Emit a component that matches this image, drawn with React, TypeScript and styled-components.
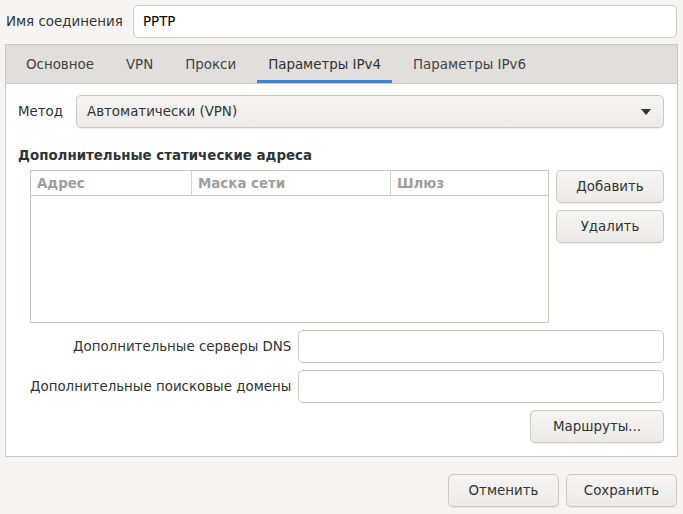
import React from 'react';
import styled, { createGlobalStyle } from 'styled-components';

const GlobalStyle = createGlobalStyle`
  html, body {
    margin: 0;
    padding: 0;
    background: #f6f5f4;
  }
  body {
    font-family: "DejaVu Sans", "Liberation Sans", sans-serif;
    font-size: 13.4px;
    color: #2e3436;
  }
  * {
    box-sizing: border-box;
  }
`;

const Window = styled.div`
  width: 683px;
  height: 514px;
  padding: 5px 6px 7px 5px;
  display: flex;
  flex-direction: column;
`;

const NameRow = styled.div`
  display: flex;
  align-items: center;
  height: 33px;
  padding-left: 1px;
`;

const NameLabel = styled.label`
  width: 127px;
`;

const Entry = styled.div`
  flex: 1;
  height: 33px;
  display: flex;
  align-items: center;
  padding: 0 9px;
  background: #fff;
  border: 1px solid #cdc7c2;
  border-radius: 5px;
  color: #000;
`;

const Notebook = styled.div`
  margin-top: 6px;
  width: 673px;
  border: 1px solid #cdc7c2;
  display: flex;
  flex-direction: column;
  background: #fff;
`;

const TabBar = styled.div`
  display: flex;
  height: 39px;
  padding-left: 4px;
  background: #e1dedb;
  border-bottom: 1px solid #cdc7c2;
`;

const Tab = styled.div<{ $active?: boolean }>`
  display: flex;
  align-items: center;
  padding: 0 11px;
  margin: 0 5px;
  color: ${(p) => (p.$active ? '#2e3436' : '#3f4546')};
  box-shadow: ${(p) => (p.$active ? 'inset 0 -3px 0 #3584e4' : 'none')};
`;

const Content = styled.div`
  padding: 11px 13px 13px 12px;
  display: flex;
  flex-direction: column;
`;

const MethodRow = styled.div`
  display: flex;
  align-items: center;
`;

const MethodLabel = styled.label`
  width: 58px;
`;

const Combo = styled.div`
  flex: 1;
  height: 33px;
  display: flex;
  align-items: center;
  justify-content: space-between;
  padding: 0 12px 0 10px;
  border: 1px solid #cdc7c2;
  border-radius: 5px;
  background: linear-gradient(#f6f5f4, #edebe9);
  box-shadow: 0 1px 0 rgba(0, 0, 0, 0.06);
`;

const Heading = styled.h3`
  margin: 20px 0 6px;
  font-size: 13.4px;
  font-weight: bold;
  line-height: 16px;
`;

const AddressSection = styled.div`
  display: flex;
  gap: 7px;
  margin-left: 12px;
`;

const Table = styled.div`
  width: 519px;
  height: 153px;
  border: 1px solid #cdc7c2;
  background: #fff;
`;

const TableHead = styled.div`
  display: grid;
  grid-template-columns: 160px 199px 1fr;
  height: 25px;
  border-bottom: 1px solid #cdc7c2;
`;

const HeadCell = styled.div`
  display: flex;
  align-items: center;
  padding-left: 6px;
  font-weight: bold;
  color: #9e9e9c;
  & + & {
    border-left: 1px solid #d8d4d0;
  }
`;

const ButtonColumn = styled.div`
  display: flex;
  flex-direction: column;
  gap: 7px;
  width: 108px;
`;

const Button = styled.button<{ $width?: number }>`
  height: 33px;
  width: ${(p) => (p.$width ? `${p.$width}px` : 'auto')};
  padding: 0 16px;
  font-family: inherit;
  font-size: 13.4px;
  color: #2e3436;
  border: 1px solid #cdc7c2;
  border-radius: 5px;
  background: linear-gradient(#f6f5f4, #edebe9);
  box-shadow: 0 1px 0 rgba(0, 0, 0, 0.07);
`;

const FieldGrid = styled.div`
  display: grid;
  grid-template-columns: auto 1fr;
  column-gap: 7px;
  row-gap: 7px;
  margin-top: 7px;
  margin-left: 12px;
  align-items: center;
`;

const FieldLabel = styled.label`
  text-align: right;
`;

const FieldEntry = styled.div`
  height: 33px;
  background: #fff;
  border: 1px solid #cdc7c2;
  border-radius: 5px;
`;

const RoutesRow = styled.div`
  display: flex;
  justify-content: flex-end;
  margin-top: 7px;
`;

const Footer = styled.div`
  display: flex;
  justify-content: flex-end;
  gap: 7px;
  margin-top: 17px;
`;

const Arrow = () => (
  <svg width="10" height="6" viewBox="0 0 10 6">
    <path d="M0 0 L10 0 L5 6 Z" fill="#2e3436" />
  </svg>
);

const tabs = ['Основное', 'VPN', 'Прокси', 'Параметры IPv4', 'Параметры IPv6'];

const App = () => {
  return (
    <>
      <GlobalStyle />
      <Window>
        <NameRow>
          <NameLabel>Имя соединения</NameLabel>
          <Entry>PPTP</Entry>
        </NameRow>
        <Notebook>
          <TabBar>
            {tabs.map((t) => (
              <Tab key={t} $active={t === 'Параметры IPv4'}>
                {t}
              </Tab>
            ))}
          </TabBar>
          <Content>
            <MethodRow>
              <MethodLabel>Метод</MethodLabel>
              <Combo>
                <span>Автоматически (VPN)</span>
                <Arrow />
              </Combo>
            </MethodRow>
            <Heading>Дополнительные статические адреса</Heading>
            <AddressSection>
              <Table>
                <TableHead>
                  <HeadCell>Адрес</HeadCell>
                  <HeadCell>Маска сети</HeadCell>
                  <HeadCell>Шлюз</HeadCell>
                </TableHead>
              </Table>
              <ButtonColumn>
                <Button>Добавить</Button>
                <Button>Удалить</Button>
              </ButtonColumn>
            </AddressSection>
            <FieldGrid>
              <FieldLabel>Дополнительные серверы DNS</FieldLabel>
              <FieldEntry />
              <FieldLabel>Дополнительные поисковые домены</FieldLabel>
              <FieldEntry />
            </FieldGrid>
            <RoutesRow>
              <Button $width={134}>Маршруты...</Button>
            </RoutesRow>
          </Content>
        </Notebook>
        <Footer>
          <Button $width={111}>Отменить</Button>
          <Button $width={111}>Сохранить</Button>
        </Footer>
      </Window>
    </>
  );
};

export default App;
